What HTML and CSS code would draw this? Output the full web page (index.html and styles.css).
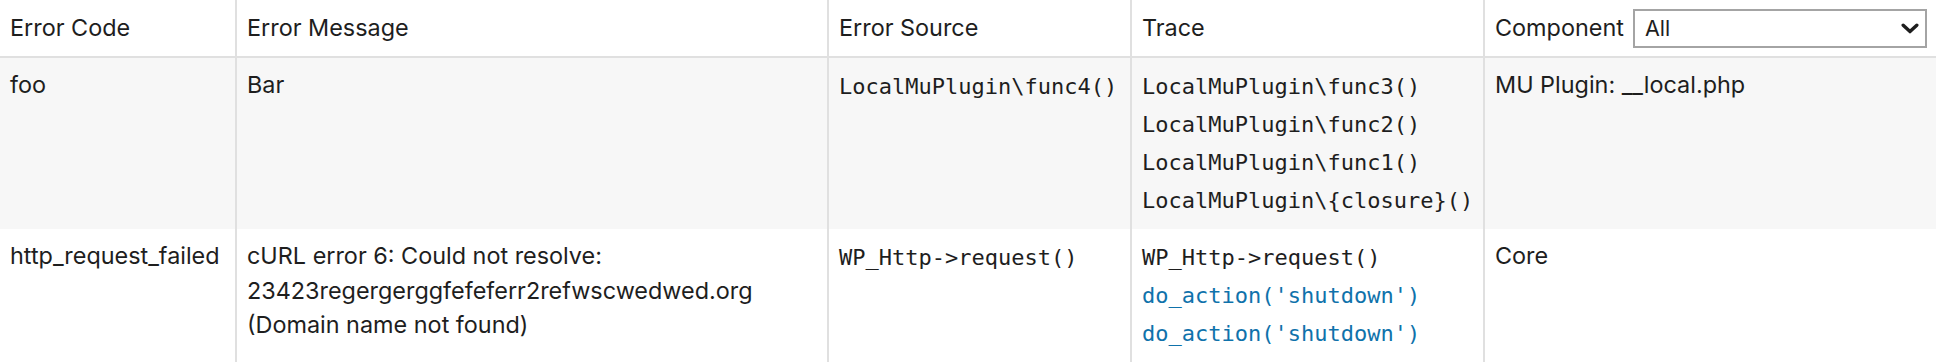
FILE: index.html
```html
<!DOCTYPE html>
<html lang="en">
<head>
  <meta charset="UTF-8" />
  <meta name="viewport" content="width=device-width, initial-scale=1.0"/>
  <title>PHP Errors</title>
  <link rel="stylesheet" href="styles.css">
</head>
<body>
  <table class="errors">
    <colgroup>
      <col class="col-code">
      <col class="col-message">
      <col class="col-source">
      <col class="col-trace">
      <col class="col-component">
    </colgroup>
    <thead>
      <tr>
        <th>Error Code</th>
        <th>Error Message</th>
        <th>Error Source</th>
        <th>Trace</th>
        <th class="filter-cell">
          <div class="filter">
            <label for="component">Component</label>
            <div class="select-wrap">
              <select id="component">
                <option>All</option>
                <option>Core</option>
                <option>MU Plugin: __local.php</option>
              </select>
              <svg class="chevron" width="18" height="11" viewBox="0 0 18 11" aria-hidden="true">
                <polyline points="2.2,2.2 9,8.6 15.8,2.2" fill="none" stroke="#1e1e1e" stroke-width="3.4" stroke-linecap="round" stroke-linejoin="round"/>
              </svg>
            </div>
          </div>
        </th>
      </tr>
    </thead>
    <tbody>
      <tr>
        <td>foo</td>
        <td>Bar</td>
        <td><code>LocalMuPlugin\func4()</code></td>
        <td>
          <ol class="trace">
            <li><code>LocalMuPlugin\func3()</code></li>
            <li><code>LocalMuPlugin\func2()</code></li>
            <li><code>LocalMuPlugin\func1()</code></li>
            <li><code>LocalMuPlugin\{closure}()</code></li>
          </ol>
        </td>
        <td>MU Plugin: __local.php</td>
      </tr>
      <tr>
        <td>http_request_failed</td>
        <td>cURL error 6: Could not resolve:<br>23423regergerggfefeferr2refwscwedwed.org<br>(Domain name not found)</td>
        <td><code>WP_Http-&gt;request()</code></td>
        <td>
          <ol class="trace">
            <li><code>WP_Http-&gt;request()</code></li>
            <li><a href="#"><code>do_action('shutdown')</code></a></li>
            <li><a href="#"><code>do_action('shutdown')</code></a></li>
          </ol>
        </td>
        <td>Core</td>
      </tr>
    </tbody>
  </table>
</body>
</html>
```

FILE: styles.css
```css
:root {
  --text: #1e1e1e;
  --border: #e0e0e0;
  --stripe: #f7f7f7;
  --link: #0f72ab;
  --select-border: #a4a4a4;
}

body {
  margin: 0;
  background: #fff;
  color: var(--text);
  font-family: Inter, "Noto Sans", sans-serif;
}

.errors {
  width: 1936px;
  table-layout: fixed;
  border-collapse: separate;
  border-spacing: 0;
  font-size: 23.4px;
  line-height: 34.5px;
}
.col-code { width: 235px; }
.col-message { width: 592px; }
.col-source { width: 303px; }
.col-trace { width: 353px; }
.col-component { width: 453px; }

.errors th,
.errors td {
  text-align: left;
  font-weight: 400;
  padding: 10px 10px 9px;
  vertical-align: top;
}
.errors th + th,
.errors td + td {
  border-left: 2px solid var(--border);
}
.errors thead th {
  height: 58px;
  box-sizing: border-box;
  padding-top: 0;
  padding-bottom: 0;
  vertical-align: middle;
  border-bottom: 2px solid var(--border);
}
.errors tbody tr:nth-child(odd) td {
  background: var(--stripe);
}

code {
  display: block;
  font-family: "DejaVu Sans Mono", monospace;
  font-size: 22px;
  line-height: 38px;
  white-space: nowrap;
}

.trace {
  list-style: none;
  margin: 0;
  padding: 0;
}
.trace a {
  color: var(--link);
  text-decoration: none;
}

.filter-cell {
  padding-right: 9px !important;
}
.filter {
  display: flex;
  align-items: center;
  gap: 9px;
}
.select-wrap {
  position: relative;
  flex: 1;
}
.select-wrap select {
  appearance: none;
  -webkit-appearance: none;
  width: 100%;
  height: 39px;
  margin: 0;
  padding: 0 40px 0 10px;
  border: 2px solid var(--select-border);
  border-radius: 0;
  background: #fff;
  color: var(--text);
  font-family: Inter, "Noto Sans", sans-serif;
  font-size: 21.5px;
}
.chevron {
  position: absolute;
  right: 8px;
  top: 14px;
  pointer-events: none;
}
```
